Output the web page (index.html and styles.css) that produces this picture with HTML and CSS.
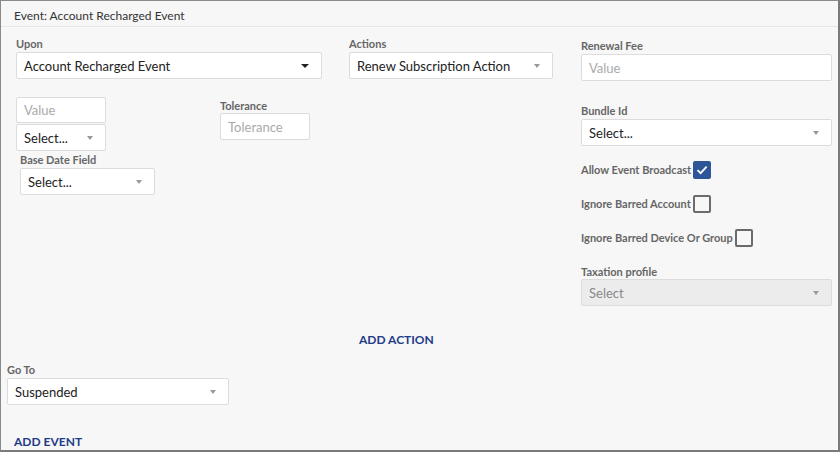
FILE: index.html
```html
<!DOCTYPE html>
<html>
<head>
<meta charset="utf-8">
<link rel="stylesheet" href="styles.css">
</head>
<body>
<div class="frame">
  <div class="header">Event: Account Recharged Event</div>
  <div class="body">
    <div class="cols">
      <div class="col col1">
        <div class="label">Upon</div>
        <div class="select dark"><span>Account Recharged Event</span><i class="arrow"></i></div>
        <div class="subrow">
          <div class="subA">
            <div class="input ph small">Value</div>
            <div class="select small"><span>Select...</span><i class="arrow"></i></div>
          </div>
          <div class="subB">
            <div class="label">Tolerance</div>
            <div class="input ph tol">Tolerance</div>
          </div>
        </div>
        <div class="base">
          <div class="label">Base Date Field</div>
          <div class="select basesel"><span>Select...</span><i class="arrow"></i></div>
        </div>
      </div>
      <div class="col col2">
        <div class="label">Actions</div>
        <div class="select"><span>Renew Subscription Action</span><i class="arrow"></i></div>
      </div>
      <div class="col col3">
        <div class="label l3">Renewal Fee</div>
        <div class="input ph">Value</div>
        <div class="label l3b">Bundle Id</div>
        <div class="select"><span>Select...</span><i class="arrow"></i></div>
        <div class="checks">
          <div class="check"><span>Allow Event Broadcast</span><i class="box on"><svg width="12" height="10" viewBox="0 0 12 10"><path d="M1.5 5.2 L4.6 8.2 L10.6 1.6" fill="none" stroke="#fff" stroke-width="1.8"/></svg></i></div>
          <div class="check"><span>Ignore Barred Account</span><i class="box"></i></div>
          <div class="check"><span>Ignore Barred Device Or Group</span><i class="box"></i></div>
        </div>
        <div class="label l3c">Taxation profile</div>
        <div class="select disabled"><span>Select</span><i class="arrow"></i></div>
      </div>
    </div>
    <div class="addaction">ADD ACTION</div>
    <div class="goto">
      <div class="label">Go To</div>
      <div class="select gotosel"><span>Suspended</span><i class="arrow"></i></div>
    </div>
    <div class="addevent">ADD EVENT</div>
  </div>
</div>
</body>
</html>
```
FILE: styles.css
```css
* { box-sizing: border-box; }
html, body { margin: 0; padding: 0; }
body {
  font-family: Lato, "Open Sans", sans-serif;
  width: 840px;
  height: 452px;
  overflow: hidden;
}
.frame {
  width: 840px;
  height: 452px;
  background: #f7f7f7;
  border-top: 1px solid #8a8a8a;
  border-left: 1px solid #8a8a8a;
  border-right: 2px solid #7a7a7a;
  border-bottom: 2px solid #7a7a7a;
}
.header {
  height: 26px;
  padding: 8px 0 0 13px;
  font-size: 12px;
  color: #333;
  border-bottom: 1px solid #e6e6e6;
  line-height: 14px;
}
.body {
  padding: 0;
}
.cols {
  display: flex;
  padding-left: 15px;
}
.col1 { width: 306px; margin-right: 27px; padding-top: 11px; }
.col2 { width: 204px; margin-right: 28px; padding-top: 11px; }
.col3 { width: 251px; padding-top: 13px; }
.label {
  font-size: 11px;
  font-weight: bold;
  color: #666;
  line-height: 12px;
  height: 14px;
  white-space: nowrap;
}
.select, .input {
  background: #fff;
  border: 1px solid #dcdcdc;
  border-radius: 2px;
  height: 27px;
  display: flex;
  align-items: center;
  padding: 0 12px 0 7px;
  font-size: 13px;
  color: #222;
}
.select span { flex: 1; white-space: nowrap; }
.input.ph { color: #aaa; }
.arrow {
  width: 0; height: 0;
  border-left: 3.5px solid transparent;
  border-right: 3.5px solid transparent;
  border-top: 4px solid #999;
}
.select.dark .arrow { border-top-color: #222; border-left-width: 4px; border-right-width: 4px; border-top-width: 4px; }
.subrow { display: flex; margin-top: 18px; }
.subA { width: 90px; }
.subA .input { height: 26px; }
.subA .select { margin-top: 1px; }
.subB { margin-left: 114px; width: 90px; padding-top: 3px; }
.subB .label { height: 13px; }
.base { margin-left: 4px; margin-top: 3px; }
.basesel { width: 135px; }
.col3 .input { margin-top: 0; }
.l3b { margin-top: 24px; }
.checks { margin-top: 15px; }
.check {
  display: flex;
  height: 34px;
  font-size: 11px;
  font-weight: bold;
  color: #666;
  align-items: flex-start;
}
.check span { line-height: 18px; white-space: nowrap; }
.box {
  width: 18px; height: 18px;
  border: 2px solid #6b6b6b;
  border-radius: 2px;
  margin-left: 2px;
  display: flex;
  align-items: center;
  justify-content: center;
}
.box.on { background: #2e5597; border-color: #2e5597; }
.l3c { margin-top: 3px; height: 13px; }
.select.disabled { background: #ececec; color: #888; }
.addaction {
  font-size: 12px;
  font-weight: bold;
  color: #1f3c88;
  padding-left: 358px;
  margin-top: 26px;
  height: 20px;
}
.goto { margin-top: 12px; padding-left: 6px; }
.gotosel { width: 222px; }
.addevent {
  font-size: 12px;
  font-weight: bold;
  color: #1f3c88;
  padding-left: 13px;
  margin-top: 29px;
}
```
